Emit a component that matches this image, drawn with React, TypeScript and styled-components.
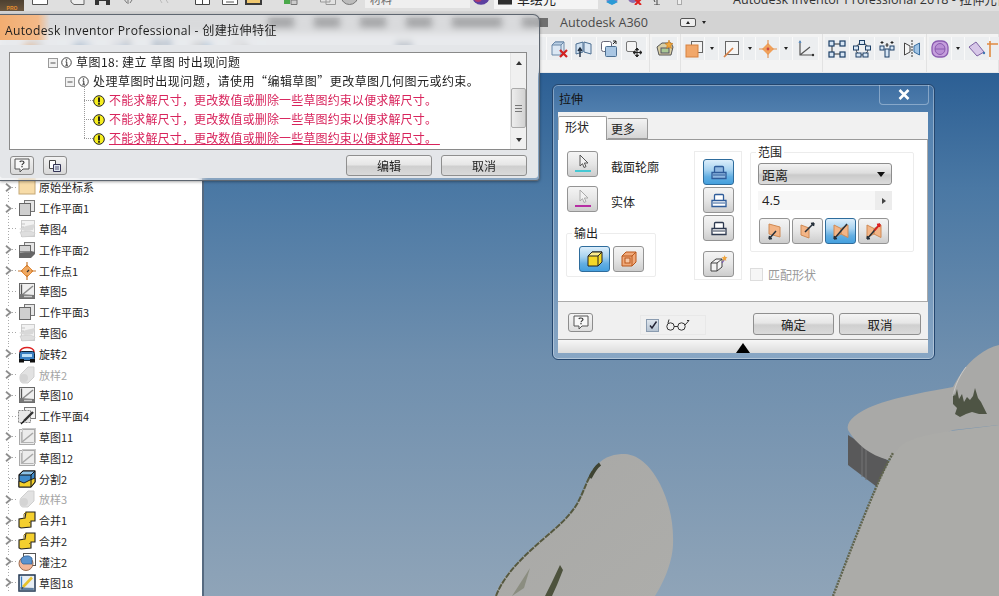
import React from "react";
import styled, { createGlobalStyle } from "styled-components";

const CJK = `"Noto Sans CJK SC", "Noto Sans", sans-serif`;
const LATIN = `"Open Sans", "Noto Sans CJK SC", sans-serif`;

const Global = createGlobalStyle`
  html, body { margin: 0; padding: 0; background: #6d8cab; overflow: hidden; }
  * { box-sizing: border-box; }
`;

const Root = styled.div`
  position: relative;
  width: 999px;
  height: 596px;
  overflow: hidden;
  display: grid;
  grid-template-rows: 11px 23px 39px 1fr;
  font-family: ${CJK};
  color: #222;
`;

/* ---------- title bar (cropped by the top of the screenshot) ---------- */
const TitleBar = styled.div`
  display: flex;
  align-items: flex-end;
  overflow: hidden;
  background: #dfdfdf;
  height: 11px;
`;
const AppBtn = styled.div`
  flex: none;
  width: 24px;
  height: 11px;
  background: linear-gradient(#4d4030, #6a563f);
  color: #e58d2f;
  font: bold 5px "Liberation Sans", sans-serif;
  line-height: 16px;
  text-align: center;
  overflow: hidden;
`;
const QuickIcon = styled.div<{ $left: number }>`
  flex: none;
  margin-left: ${(p) => p.$left}px;
  height: 12px;
  padding-bottom: 6px;
  display: flex;
  align-items: flex-end;
`;
const SearchBox = styled.div`
  flex: none;
  margin-left: 7px;
  margin-bottom: 3px;
  width: 105px;
  height: 10px;
  background: #efefef;
  padding-left: 5px;
  font-size: 11px;
  line-height: 2px;
  color: #666;
  overflow: hidden;
`;
const UserBox = styled.div`
  flex: none;
  margin-left: 4px;
  width: 104px;
  height: 9px;
  margin-bottom: 2px;
  background: #f4f4f4;
  display: flex;
  gap: 5px;
  padding-left: 4px;
  font-size: 13px;
  line-height: 1px;
  color: #222;
  overflow: hidden;
  & > span {
    margin-top: -2px;
  }
`;
const AppTitle = styled.div`
  flex: none;
  margin-left: 51px;
  font: 12.6px ${LATIN};
  line-height: 6px;
  height: 6px;
  margin-bottom: 8px;
  color: #333;
  white-space: nowrap;
`;

/* ---------- tabs ---------- */
const TabRow = styled.div`
  display: flex;
  align-items: center;
  background: #d3d3d3;
`;
const TabGhost = styled.span<{ $left: number; $w: number }>`
  flex: none;
  margin-left: ${(p) => p.$left}px;
  width: ${(p) => p.$w}px;
  height: 9px;
  background: #6f6f6f;
`;
const Tab = styled.span<{ $left: number }>`
  flex: none;
  margin-left: ${(p) => p.$left}px;
  font: 12.6px ${LATIN};
  color: #4a4a4a;
  white-space: nowrap;
`;
const ToggleBtn = styled.span`
  flex: none;
  margin-left: 32px;
  width: 16px;
  height: 9px;
  border: 1px solid #555;
  border-radius: 2px;
  background: #eee;
  display: flex;
  align-items: center;
  justify-content: center;
  &::before {
    content: "";
    border-left: 2.5px solid transparent;
    border-right: 2.5px solid transparent;
    border-bottom: 3px solid #222;
  }
`;
const Caret = styled.span<{ $left?: number }>`
  flex: none;
  display: block;
  margin-left: ${(p) => p.$left ?? 0}px;
  border-left: 2.5px solid transparent;
  border-right: 2.5px solid transparent;
  border-top: 3px solid #222;
`;

/* ---------- ribbon ---------- */
const Ribbon = styled.div`
  display: flex;
  background: #f3f3f3;
  border-bottom: 1px solid #e6e8ea;
`;
const RibbonPanel = styled.div<{ $w: number }>`
  flex: none;
  width: ${(p) => p.$w}px;
  padding: 3px 2px 0;
  border-right: 1px solid #e2e2e2;
  display: flex;
  align-items: flex-start;
`;
const RibbonBtn = styled.div<{ $w?: number }>`
  flex: none;
  width: ${(p) => p.$w ?? 25}px;
  height: 23px;
  background: #eceef0;
  border-right: 1px solid #f9f9f9;
  display: flex;
  align-items: center;
  justify-content: center;
`;

/* ---------- main ---------- */
const Main = styled.div`
  display: flex;
  min-height: 0;
`;
const BrowserPanel = styled.div`
  flex: none;
  width: 204px;
  background: #fff;
  border-right: 2px solid #566a80;
  padding-top: 104px;
`;
const TreeRow = styled.div`
  height: 20.8px;
  display: flex;
  align-items: center;
  font-size: 11px;
  white-space: nowrap;
`;
const Connector = styled.span`
  flex: none;
  width: 18px;
  height: 100%;
  display: flex;
  align-items: center;
  background:
    repeating-linear-gradient(to bottom, #aaa 0 1px, transparent 1px 3px) 8px 0 / 1px 100% no-repeat,
    repeating-linear-gradient(to right, #aaa 0 1px, transparent 1px 3px) 9px 50% / 9px 1px no-repeat;
`;
const Chevron = styled.svg`
  display: block;
  margin-left: 5px;
  background: #fff;
`;
const TreeLabel = styled.span<{ $faded?: boolean }>`
  margin-left: 3px;
  color: ${(p) => (p.$faded ? "#a4a4a4" : "#252525")};
`;
const Viewport = styled.div`
  flex: 1;
  min-width: 0;
  background: linear-gradient(#2c5f94 0%, #4a78a4 22%, #6f8fae 55%, #8fa4b8 100%);
`;
const ModelSvg = styled.svg`
  display: block;
  width: 100%;
  height: 100%;
`;

/* ---------- error window ---------- */
const ErrorWindow = styled.div`
  position: absolute;
  left: 0;
  top: 14px;
  width: 540px;
  height: 167px;
  border: 1px solid #5e6670;
  border-left: none;
  border-radius: 0 7px 4px 0;
  background: rgba(226, 229, 233, 0.42);
  backdrop-filter: blur(3.5px);
  display: flex;
  flex-direction: column;
  box-shadow: 0 1px 3px rgba(0, 0, 0, 0.35);
`;
const ErrorTitle = styled.div`
  flex: none;
  height: 30px;
  padding: 0 0 0 5px;
  font: 12.1px ${LATIN};
  letter-spacing: 0.33px;
  color: #1d1d1d;
  display: flex;
  align-items: center;
  white-space: nowrap;
  background: linear-gradient(to right, #f2ad70 0, #f3b988 38px, rgba(240, 190, 150, 0) 50px) 0 0 / 100% 25px no-repeat;
`;
const ErrorBody = styled.div`
  flex: 1;
  margin: 0 1px 2px 0;
  padding: 7px 11px 0 9px;
  background: #e4e6e9;
  border-radius: 0 0 3px 3px;
`;
const MessageBox = styled.div`
  height: 98px;
  display: flex;
  background: #fff;
  border: 1px solid #8a8a8a;
`;
const MessageList = styled.div`
  position: relative;
  flex: 1;
`;
const TreeStem = styled.span`
  position: absolute;
  left: 74px;
  top: 34px;
  width: 1px;
  height: 51px;
  background: repeating-linear-gradient(to bottom, #999 0 1px, transparent 1px 2px);
`;
const MessageRow = styled.div<{ $indent: number; $error?: boolean; $underline?: boolean }>`
  height: 19px;
  padding-left: ${(p) => p.$indent}px;
  display: flex;
  align-items: center;
  gap: 4px;
  font-size: 12px;
  white-space: nowrap;
  color: ${(p) => (p.$error ? "#d8245c" : "#222")};
  & > b {
    font-weight: 400;
    position: relative;
    top: -1px;
    text-decoration: ${(p) => (p.$underline ? "underline" : "none")};
    letter-spacing: ${(p) => (p.$error ? 0.15 : 0.46)}px;
  }
`;
const Scrollbar = styled.div`
  flex: none;
  width: 16px;
  background: #f0f0f0;
  border-left: 1px solid #e4e4e4;
  display: flex;
  flex-direction: column;
  align-items: center;
  justify-content: space-between;
  padding: 8px 0 7px;
  position: relative;
`;
const ScrollThumb = styled.div`
  position: absolute;
  left: 0;
  top: 35px;
  width: 15px;
  height: 40px;
  background: linear-gradient(to right, #ededed, #d2d2d2);
  border: 1px solid #aaa;
  border-radius: 2px;
  display: flex;
  flex-direction: column;
  align-items: center;
  justify-content: center;
  gap: 2px;
  & > i {
    width: 7px;
    height: 1px;
    background: #777;
  }
`;
const ArrowUp = styled.span`
  border-left: 3px solid transparent;
  border-right: 3px solid transparent;
  border-bottom: 4px solid #333;
`;
const ArrowDown = styled.span`
  border-left: 3px solid transparent;
  border-right: 3px solid transparent;
  border-top: 4px solid #333;
`;
const ErrorFooter = styled.div`
  margin-top: 5px;
  display: flex;
  align-items: center;
`;
const SmallBtn = styled.div<{ $w: number; $left?: number }>`
  flex: none;
  margin-left: ${(p) => p.$left ?? 0}px;
  width: ${(p) => p.$w}px;
  height: 19px;
  border: 1px solid #8d8d8d;
  border-radius: 3px;
  background: linear-gradient(#f3f3f3, #d8d8d8);
  display: flex;
  align-items: center;
  justify-content: center;
`;
const PushBtn = styled.button<{ $w: number; $left?: number }>`
  flex: none;
  margin-left: ${(p) => p.$left ?? 0}px;
  width: ${(p) => p.$w}px;
  height: 21px;
  padding: 0;
  border: 1px solid #8f8f8f;
  border-radius: 3px;
  background: linear-gradient(#f4f4f4 0%, #e6e6e6 45%, #cfcfcf 55%, #dadada 100%);
  font-family: ${CJK};
  font-size: 12px;
  color: #222;
`;

/* ---------- extrude window ---------- */
const ExtrudeWindow = styled.div`
  position: absolute;
  left: 552px;
  top: 84px;
  width: 383px;
  height: 276px;
  border: 1px solid #24466e;
  border-radius: 6px;
  background: linear-gradient(#3f6fa2 0%, #5482b0 12%, #6d93b8 60%, #88a6c4 100%);
  box-shadow: inset 0 0 0 1px rgba(255, 255, 255, 0.35);
  display: flex;
  flex-direction: column;
  padding: 0 6px 6px 5px;
`;
const ExtrudeHead = styled.div`
  flex: none;
  height: 27px;
  display: flex;
  align-items: flex-start;
  justify-content: space-between;
  font-size: 12px;
  color: #111;
  padding-left: 1px;
  line-height: 28px;
`;
const CloseBtn = styled.div`
  flex: none;
  width: 50px;
  height: 20px;
  margin-right: -1px;
  border: 1px solid rgba(210, 225, 240, 0.45);
  border-top: none;
  border-radius: 0 0 4px 4px;
  display: flex;
  align-items: center;
  justify-content: center;
`;
const ExtrudeClient = styled.div`
  flex: 1;
  display: flex;
  flex-direction: column;
  background: #f1f1f1;
  min-height: 0;
`;
const TabStrip = styled.div`
  flex: none;
  height: 27px;
  padding-top: 4px;
  display: flex;
  align-items: flex-end;
  background: #f1f1f1;
`;
const DlgTab = styled.div<{ $active?: boolean }>`
  flex: none;
  width: ${(p) => (p.$active ? 49 : 41)}px;
  height: ${(p) => (p.$active ? 24 : 21)}px;
  margin-bottom: ${(p) => (p.$active ? -1 : 0)}px;
  border: 1px solid #9a9a9a;
  border-bottom: ${(p) => (p.$active ? "none" : "1px solid #9a9a9a")};
  border-left-color: ${(p) => (p.$active ? "#bbb" : "transparent")};
  border-radius: 2px 2px 0 0;
  background: ${(p) => (p.$active ? "#fff" : "linear-gradient(#f2f2f2, #d6d6d6)")};
  font-size: 12px;
  line-height: 20px;
  padding-left: ${(p) => (p.$active ? 6 : 3)}px;
  position: relative;
`;
const FormArea = styled.div`
  flex: none;
  height: 163px;
  background: #fff;
  border-top: 1px solid #9a9a9a;
  border-right: 1px solid #aaa;
  border-bottom: 1px solid #aaa;
  display: grid;
  grid-template-columns: 99px 44px auto;
  column-gap: 0;
  padding: 11px 0 0 9px;
`;
const LeftCol = styled.div`
  display: flex;
  flex-direction: column;
  gap: 9px;
`;
const SelectRow = styled.div`
  display: flex;
  align-items: center;
  gap: 13px;
  font-size: 12px;
`;
const SelectLabel = styled.span`
  position: relative;
  top: 2px;
`;
const FeatureBtn = styled.div<{ $active?: boolean; $w?: number; $h?: number }>`
  flex: none;
  width: ${(p) => p.$w ?? 31}px;
  height: ${(p) => p.$h ?? 26}px;
  border: 1px solid ${(p) => (p.$active ? "#2e6c9c" : "#949494")};
  border-radius: 3px;
  background: ${(p) =>
    p.$active
      ? "linear-gradient(#dceefb 0%, #a9d3f0 40%, #62aee2 70%, #45a0de 100%)"
      : "linear-gradient(#f4f4f4 0%, #e6e6e6 50%, #cdcdcd 100%)"};
  display: flex;
  align-items: center;
  justify-content: center;
`;
const Group = styled.fieldset<{ $w?: number }>`
  margin: 0;
  min-width: 0;
  width: ${(p) => (p.$w ? `${p.$w}px` : "auto")};
  border: 1px solid #ececec;
  border-radius: 2px;
`;
const GroupLegend = styled.legend<{ $shift: number }>`
  padding: 0 2px;
  margin-left: ${(p) => p.$shift}px;
  font-size: 12px;
  line-height: 12px;
`;
const OutputGroup = styled(Group)`
  margin: 6px 0 0 -1px;
  height: 50px;
  padding: 7px 0 0 12px;
`;
const OutputRow = styled.div`
  display: flex;
  gap: 3px;
`;
const DirectionGroup = styled.div`
  margin-left: 28px;
  width: 48px;
  height: 129px;
  border: 1px solid #ececec;
  padding: 7px 0 0 8px;
  display: flex;
  flex-direction: column;
  gap: 2px;
`;
const DirSpacer = styled.div`
  height: 6px;
  flex: none;
`;
const RightCol = styled.div`
  margin-left: 40px;
  display: flex;
  flex-direction: column;
`;
const RangeGroup = styled(Group)`
  width: 164px;
  height: 106px;
  margin-top: -5px;
  padding: 5px 0 0 7px;
`;
const DropDown = styled.div`
  width: 134px;
  height: 22px;
  border: 1px solid #8d8d8d;
  border-radius: 3px;
  background: linear-gradient(#f2f2f2, #dedede 45%, #cacaca 55%, #dcdcdc);
  font-size: 13px;
  padding: 0 6px 0 3px;
  display: flex;
  align-items: center;
  justify-content: space-between;
  &::after {
    content: "";
    border-left: 4px solid transparent;
    border-right: 4px solid transparent;
    border-top: 5px solid #111;
  }
`;
const NumberField = styled.div`
  margin-top: 6px;
  width: 134px;
  height: 19px;
  background: #f7f7f7;
  font: 13px ${LATIN};
  padding-left: 4px;
  display: flex;
  align-items: center;
  justify-content: space-between;
  line-height: 19px;
`;
const Spinner = styled.span`
  width: 17px;
  height: 100%;
  background: #ececec;
  display: flex;
  align-items: center;
  justify-content: center;
  &::before {
    content: "";
    border-top: 3px solid transparent;
    border-bottom: 3px solid transparent;
    border-left: 4px solid #444;
  }
`;
const RangeButtons = styled.div`
  margin-top: 8px;
  display: flex;
  gap: 2px;
  padding-left: 1px;
`;
const MatchRow = styled.div`
  margin-top: 14px;
  display: flex;
  align-items: center;
  gap: 5px;
  font-size: 12px;
  color: #9a9a9a;
`;
const DisabledCheck = styled.span`
  width: 13px;
  height: 13px;
  background: #f6f6f6;
  border: 1px solid #ddd;
`;
const DlgFooter = styled.div`
  flex: none;
  height: 37px;
  padding: 11px 7px 0 10px;
  display: flex;
  align-items: flex-start;
  background: #f0f0f0;
`;
const HelpBtn = styled.div`
  flex: none;
  width: 25px;
  height: 19px;
  border: 1px solid #8d8d8d;
  border-radius: 3px;
  background: linear-gradient(#f5f5f5, #dedede);
  display: flex;
  align-items: center;
  justify-content: center;
`;
const PreviewGroup = styled.div`
  flex: none;
  margin: 2px 0 0 47px;
  width: 66px;
  height: 20px;
  border: 1px solid #e8e8e8;
  padding-left: 5px;
  display: flex;
  align-items: center;
  gap: 6px;
`;
const CheckBox = styled.span`
  flex: none;
  width: 13px;
  height: 13px;
  border: 1px solid #8b9cb0;
  background: linear-gradient(#dfe6ee, #b7c4d2);
  display: flex;
  align-items: center;
  justify-content: center;
`;
const WideBtn = styled(PushBtn)`
  height: 22px;
  font-size: 12.5px;
`;
const SliderBar = styled.div`
  flex: 1;
  min-height: 0;
  border-top: 1px solid #999;
  background: linear-gradient(#f6f6f6, #dcdcdc);
  display: flex;
  justify-content: center;
  align-items: flex-end;
  padding-right: 1px;
  &::before {
    content: "";
    border-left: 7px solid transparent;
    border-right: 7px solid transparent;
    border-bottom: 10px solid #000;
  }
`;

/* ---------- drawings ---------- */
const Ico = styled.svg`
  display: block;
  flex: none;
`;
const SpacedIco = styled(Ico)<{ $after: number }>`
  margin-right: ${(p) => p.$after}px;
`;
type IP = { s?: number; children: React.ReactNode };
const I = ({ s = 18, children }: IP) => (
  <Ico width={s} height={s} viewBox="0 0 18 18">
    {children}
  </Ico>
);

const treeIcons: Record<string, React.ReactNode> = {
  folder: (
    <I>
      <rect x="1" y="0" width="16" height="16" fill="#f7dca8" stroke="#c4a877" />
      <rect x="1" y="0" width="16" height="2.5" fill="#e8c27f" />
    </I>
  ),
  plane: (
    <I>
      <rect x="6.5" y="1.5" width="10" height="11" fill="#e6e6e6" stroke="#777" />
      <rect x="1.5" y="4.5" width="11" height="12" fill="#cfcfcf" stroke="#666" />
    </I>
  ),
  planeDark: (
    <I>
      <rect x="6.5" y="1.5" width="10" height="11" fill="#e6e6e6" stroke="#777" />
      <rect x="1.5" y="4.5" width="11" height="12" fill="#d5d5d5" stroke="#666" />
      <polygon points="1,12 13,10 17,11 17,13 13,17 1,17" fill="#666" />
      <rect x="2" y="10" width="10" height="1.5" fill="#888" />
    </I>
  ),
  sketchFaint: (
    <I>
      <rect x="3.5" y="0.5" width="13" height="16" fill="#f2f2f2" stroke="#ccc" />
      <polygon points="1,9 8,6 17,4 15,10 7,11" fill="#d8d8d8" />
      <polygon points="2,12 12,11 17,13 16,16 4,17" fill="#dedede" stroke="#c8c8c8" strokeWidth=".6" />
      <path d="M3 4h4M3 7h3" stroke="#c4c4c4" strokeWidth="1.2" />
    </I>
  ),
  sketchDark: (
    <I>
      <rect x="1.5" y="1.5" width="15" height="15" fill="#efefef" stroke="#666" />
      <path d="M3.5 2.5V14.5H16" fill="none" stroke="#555" strokeWidth="1.3" />
      <path d="M4 13 15 4" stroke="#8a8a8a" strokeWidth="1.5" />
      <polygon points="1.5,12 16.5,13 16.5,16.5 1.5,16.5" fill="#777" />
      <rect x="6" y="13.8" width="8" height="1.4" fill="#ccc" />
    </I>
  ),
  point: (
    <I>
      <polygon points="9,3 15,9 9,15 3,9" fill="#f0a860" stroke="#e08a3a" />
      <path d="M9 0V5M9 13V18M0 9H5M13 9H18" stroke="#c8782e" strokeWidth="1.2" />
      <path d="M9 10 11 8" stroke="#333" strokeWidth="1.2" />
    </I>
  ),
  revolve: (
    <I>
      <path d="M2 7C2 1 16 1 16 7" fill="none" stroke="#d22" strokeWidth="1.7" />
      <rect x="1.5" y="6.5" width="15" height="9" rx="2" fill="#3b7fc0" stroke="#123" />
      <rect x="4" y="9" width="10" height="3" fill="#bfe0f7" />
      <rect x="1" y="14" width="5" height="3.5" fill="#111" />
      <rect x="12" y="14" width="5" height="3.5" fill="#111" />
    </I>
  ),
  loft: (
    <I>
      <path d="M3 8 10 1H16V11L10 17H5C2 17 1 11 3 8Z" fill="#e2e2e2" stroke="#cfcfcf" />
      <circle cx="6" cy="12" r="4" fill="#d4d4d4" />
    </I>
  ),
  planePen: (
    <I>
      <rect x="6.5" y="0.5" width="11" height="11" fill="#f4f4f4" stroke="#777" />
      <rect x="0.5" y="3.5" width="12" height="12" fill="#e8e8e8" stroke="#888" strokeDasharray="2 1" />
      <path d="M15 5 6 14" stroke="#333" strokeWidth="2.4" />
      <path d="M6 14 3 17" stroke="#111" strokeWidth="1.2" />
    </I>
  ),
  sketchGrey: (
    <I>
      <rect x="1.5" y="1.5" width="15" height="15" fill="#ececec" stroke="#aaa" />
      <rect x="4.5" y="0.5" width="13" height="14" fill="none" stroke="#c8c8c8" />
      <path d="M4 14 15 5" stroke="#a8a8a8" strokeWidth="1.6" />
      <path d="M3.5 4V14.5H15" fill="none" stroke="#b4b4b4" strokeWidth="1.2" />
    </I>
  ),
  split: (
    <I>
      <polygon points="1,5 5,1 17,1 17,12 13,17 1,17" fill="#3f8bcb" stroke="#111" strokeWidth="1.2" />
      <polygon points="1,11 6,13 12,10 17,8 17,12 13,17 1,17" fill="#f2cf2a" stroke="#222" />
      <polygon points="1,5 5,1 17,1 13,5" fill="#8cc3ea" stroke="#111" />
      <path d="M13 5V17" stroke="#111" />
    </I>
  ),
  merge: (
    <I>
      <polygon points="8,1 17,1 17,10 13,10 13,16 3,17 1,16 1,8 7,7" fill="#f4cf2e" stroke="#222" strokeWidth="1.1" />
      <path d="M8 1 6 3V8M13 10 11 12" fill="none" stroke="#8a6f10" />
    </I>
  ),
  cast: (
    <I>
      <rect x="5.5" y="0.5" width="12" height="12" fill="#fff" stroke="#555" />
      <circle cx="8" cy="10.5" r="7" fill="#f2b79a" stroke="#9a6a4c" />
      <path d="M3 8a6 5 0 0 1 11-3v6H5A6 5 0 0 1 3 8Z" fill="#5a93cf" stroke="#2b5c8f" strokeWidth=".7" />
    </I>
  ),
  sketch18: (
    <I>
      <rect x="1" y="1" width="16" height="16" fill="#e7eef5" stroke="#1f3550" strokeWidth="1.5" />
      <path d="M3.5 2.5V15H15.5" fill="none" stroke="#3a7fc2" strokeWidth="1.3" />
      <path d="M5 13 14 3.5" stroke="#e8c32c" strokeWidth="2.6" />
      <path d="M5 13 4 15" stroke="#333" strokeWidth="1.2" />
      <polygon points="1,13 17,14 17,17 1,17" fill="#5a6c80" opacity=".55" />
    </I>
  ),
};

const treeItems: { icon: string; label: string; chevron: boolean; faded?: boolean }[] = [
  { icon: "folder", label: "原始坐标系", chevron: true },
  { icon: "plane", label: "工作平面1", chevron: true },
  { icon: "sketchFaint", label: "草图4", chevron: false },
  { icon: "planeDark", label: "工作平面2", chevron: true },
  { icon: "point", label: "工作点1", chevron: true },
  { icon: "sketchDark", label: "草图5", chevron: false },
  { icon: "plane", label: "工作平面3", chevron: true },
  { icon: "sketchFaint", label: "草图6", chevron: false },
  { icon: "revolve", label: "旋转2", chevron: true },
  { icon: "loft", label: "放样2", chevron: true, faded: true },
  { icon: "sketchDark", label: "草图10", chevron: true },
  { icon: "planePen", label: "工作平面4", chevron: false },
  { icon: "sketchGrey", label: "草图11", chevron: true },
  { icon: "sketchGrey", label: "草图12", chevron: true },
  { icon: "split", label: "分割2", chevron: false },
  { icon: "loft", label: "放样3", chevron: true, faded: true },
  { icon: "merge", label: "合并1", chevron: true },
  { icon: "merge", label: "合并2", chevron: true },
  { icon: "cast", label: "灌注2", chevron: true },
  { icon: "sketch18", label: "草图18", chevron: true },
];

const ChevronIcon = () => (
  <Chevron width="7" height="9" viewBox="0 0 7 9">
    <path d="M1 .8 5.5 4.5 1 8.2" fill="none" stroke="#8d8d8d" strokeWidth="1.8" />
  </Chevron>
);

const Minus = () => (
  <SpacedIco $after={-1} width="10" height="10" viewBox="0 0 10 10">
    <rect x=".5" y=".5" width="9" height="9" fill="#f2f2f2" stroke="#9a9a9a" />
    <path d="M2.5 5h5" stroke="#555" />
  </SpacedIco>
);
const InfoIcon = () => (
  <Ico width="11" height="11" viewBox="0 0 12 12">
    <circle cx="6" cy="6" r="5.2" fill="#fff" stroke="#333" />
    <path d="M5 5.3h1.3v3.5M4.8 9h2.8" fill="none" stroke="#222" />
    <circle cx="6" cy="3.2" r=".8" fill="#222" />
  </Ico>
);
const WarnIcon = () => (
  <Ico width="12" height="12" viewBox="0 0 12 12">
    <circle cx="6" cy="6" r="5.3" fill="#f6ee1f" stroke="#222" />
    <rect x="5.1" y="2.4" width="1.8" height="5" fill="#111" />
    <rect x="5.1" y="8.1" width="1.8" height="1.6" fill="#111" />
  </Ico>
);
const Dash = () => (
  <SpacedIco $after={-4} width="9" height="1" viewBox="0 0 9 1">
    <path d="M0 .5h9" stroke="#999" strokeDasharray="1 1" />
  </SpacedIco>
);
const HelpIcon = () => (
  <Ico width="16" height="15" viewBox="0 0 16 15">
    <path d="M1 1H15V11H9L6 14V11H1Z" fill="#f8f8f8" stroke="#555" />
    <path d="M5.8 4C6.2 2.6 9.8 2.6 10 4.3 10.1 5.6 8 5.6 8 7.3" fill="none" stroke="#333" strokeWidth="1.1" />
    <rect x="7.4" y="8" width="1.2" height="1.3" fill="#333" />
  </Ico>
);
const CopyIcon = () => (
  <Ico width="14" height="14" viewBox="0 0 14 14">
    <path d="M1.5 1.5H7.5V9.5H1.5Z" fill="#fff" stroke="#444" />
    <path d="M5.5 5.5H12.5V12.5H5.5Z" fill="#dfe6ef" stroke="#335" />
    <path d="M7 8h4M7 10h4" stroke="#557" />
  </Ico>
);

/* ribbon icons */
const cube = (
  <>
    <polygon points="2,5 5,2 14,2 14,12 11,15 2,15" fill="#dbe7f3" stroke="#6a88a8" />
    <polygon points="2,5 5,2 14,2 11,5" fill="#b9cfe4" stroke="#6a88a8" />
    <path d="M11 5V15" stroke="#6a88a8" />
  </>
);
const ribbonIcons: Record<string, React.ReactNode> = {
  cubeX: (
    <I>
      {cube}
      <path d="M10 10 17 17M17 10 10 17" stroke="#d22020" strokeWidth="2.2" />
    </I>
  ),
  replace: (
    <I>
      <path d="M1 4 8 2 8 12 1 14Z" fill="#cfe0f0" stroke="#4c6f92" />
      <path d="M9 2 16 4 16 14 9 12Z" fill="#dbe7f3" stroke="#4c6f92" />
      <path d="M5 17V9M3 11l2-3 2 3" fill="none" stroke="#1e2d40" strokeWidth="1.4" />
    </I>
  ),
  copy: (
    <I>
      <rect x="1.5" y="1.5" width="10" height="10" rx="2" fill="#fff" stroke="#667" />
      <rect x="5.5" y="6.5" width="11" height="10" rx="1" fill="#a9c6e3" stroke="#4c6f92" />
      <path d="M13 1h3v3M16 1l-3 3" fill="none" stroke="#222" />
    </I>
  ),
  move: (
    <I>
      <rect x="1.5" y="1.5" width="10" height="10" rx="1.5" fill="#f4f4f4" stroke="#777" />
      <path d="M12 8V17M8 12.5H17M12 8l-1.6 1.8h3.2ZM12 17l-1.6-1.8h3.2ZM8 12.5l1.8-1.6v3.2ZM17 12.5l-1.8-1.6v3.2Z" stroke="#222" fill="#222" />
    </I>
  ),
  boxStar: (
    <I>
      <polygon points="1,7 6,3 15,3 17,7 15,15 3,15" fill="#d9cfa6" stroke="#555" />
      <rect x="5" y="8" width="8" height="5" fill="#a9c795" stroke="#556" />
      <path d="M13 0 14 3 17 3.5 14.8 5.5 15.5 8.5 13 7 10.5 8.5 11.2 5.5 9 3.5 12 3Z" fill="#f2a63a" stroke="#b86f15" strokeWidth=".5" />
    </I>
  ),
  planeOrange: (
    <I>
      <rect x="6.5" y="1.5" width="11" height="11" fill="#f3f3f3" stroke="#666" />
      <rect x="1" y="5" width="12" height="12" fill="#f1a76a" stroke="#d7813f" />
    </I>
  ),
  planePen: (
    <I>
      <rect x="3.5" y="1.5" width="13" height="13" fill="#f5f5f5" stroke="#666" />
      <path d="M11 8 2 17" stroke="#d6824a" strokeWidth="1.7" />
    </I>
  ),
  point: (
    <I>
      <polygon points="9,3 15,9 9,15 3,9" fill="#f0a05a" />
      <path d="M9 0V5M9 13V18M0 9H5M13 9H18" stroke="#e2914e" strokeWidth="1.1" />
      <circle cx="9" cy="9" r="1.4" fill="#c44" />
    </I>
  ),
  axes: (
    <I>
      <path d="M3 1V15H17M3 15 13 7" fill="none" stroke="#555" strokeWidth="1.2" />
      <path d="M3 0 1.5 3h3Z" fill="#5a8ec4" />
      <circle cx="16" cy="15" r="1.2" fill="#333" />
    </I>
  ),
  rectPattern: (
    <I>
      <path d="M4 4H14M4 14H14M4 4V14" stroke="#333" />
      <rect x="1" y="1" width="5" height="5" fill="#d7e6f5" stroke="#1c3f66" strokeWidth="1.2" />
      <rect x="12" y="1" width="5" height="5" fill="#d7e6f5" stroke="#1c3f66" strokeWidth="1.2" />
      <rect x="1" y="12" width="5" height="5" fill="#d7e6f5" stroke="#1c3f66" strokeWidth="1.2" />
      <rect x="12" y="12" width="5" height="5" fill="#d7e6f5" stroke="#1c3f66" strokeWidth="1.2" />
    </I>
  ),
  circPattern: (
    <I>
      <circle cx="9" cy="9" r="6" fill="none" stroke="#444" />
      <rect x="6.5" y="0.5" width="5" height="4" fill="#d7e6f5" stroke="#1c3f66" />
      <rect x="0.5" y="6" width="5" height="4" fill="#d7e6f5" stroke="#1c3f66" />
      <rect x="12.5" y="6" width="5" height="4" fill="#d7e6f5" stroke="#1c3f66" />
      <rect x="3" y="13" width="5" height="4" fill="#d7e6f5" stroke="#1c3f66" />
      <rect x="10" y="13" width="5" height="4" fill="#d7e6f5" stroke="#1c3f66" />
    </I>
  ),
  grid: (
    <I>
      <rect x="2" y="6" width="4" height="4" fill="#d7e6f5" stroke="#1c3f66" />
      <rect x="7" y="9" width="4" height="8" fill="#d7e6f5" stroke="#1c3f66" />
      <rect x="12" y="6" width="4" height="4" fill="#d7e6f5" stroke="#1c3f66" />
      <path d="M4 1V4M2.5 2.5H5.5M9 3V7M7.5 5H10.5M14 1V4M12.5 2.5H15.5" stroke="#222" />
    </I>
  ),
  mirror: (
    <I>
      <path d="M1.5 3 7 6V12L1.5 15Z" fill="#f4f4f4" stroke="#444" />
      <path d="M16.5 3 11 6V12L16.5 15Z" fill="#9fc3e4" stroke="#3a6fa0" />
      <path d="M9 0V18" stroke="#333" strokeDasharray="2 1" />
    </I>
  ),
  sphere: (
    <I>
      <rect x="1" y="1" width="16" height="16" rx="6" fill="#c6a0dd" stroke="#8a5bb0" strokeWidth="1.3" />
      <ellipse cx="9" cy="9" rx="5" ry="5.5" fill="#b98fd4" stroke="#8a5bb0" />
      <path d="M4 9H14" stroke="#8a5bb0" />
    </I>
  ),
  diamond: (
    <I>
      <polygon points="1,7 8,2 16,12 9,16" fill="#d7c7e8" stroke="#7e63a3" />
      <circle cx="16" cy="13" r="1.2" fill="#3f78b5" />
    </I>
  ),
  orange: (
    <I>
      <path d="M4 1V17M1 4H12" stroke="#e08b42" strokeWidth="1.6" />
    </I>
  ),
};

const RB = ({ k, w }: { k: string; w?: number }) => <RibbonBtn $w={w}>{ribbonIcons[k]}</RibbonBtn>;
const DD = ({ w }: { w: number }) => (
  <RibbonBtn $w={w}>
    <Caret />
  </RibbonBtn>
);

/* dialog icons */
const Cursor = ({ color, line }: { color: string; line: string }) => (
  <Ico width="20" height="20" viewBox="0 0 20 20">
    <path d="M7 1V12L9.5 9.7 11 13.5 13 12.6 11.4 9H15Z" fill="#f2f2f2" stroke={color} />
    <path d="M2 17H18" stroke={line} strokeWidth="1.7" />
  </Ico>
);
const SolidOut = () => (
  <Ico width="18" height="18" viewBox="0 0 18 18">
    <polygon points="2,6 6,2 16,2 16,12 12,16 2,16" fill="#f6d827" stroke="#222" />
    <polygon points="2,6 6,2 16,2 12,6" fill="#faeb8c" stroke="#222" />
    <path d="M12 6V16" stroke="#222" />
  </Ico>
);
const SurfaceOut = () => (
  <Ico width="18" height="18" viewBox="0 0 18 18">
    <polygon points="2,6 6,2 16,2 16,12 12,16 2,16" fill="#f0a97a" stroke="#b8571a" />
    <path d="M2 6H12V16M12 6 16 2" fill="none" stroke="#b8571a" />
    <rect x="5" y="8" width="5" height="5" fill="#f6c7a6" stroke="#b8571a" />
  </Ico>
);
const DirIcon = ({ fill, stroke, trayTop }: { fill: string; stroke: string; trayTop?: boolean }) => (
  <Ico width="18" height="17" viewBox="0 0 18 17">
    <rect x="4.5" y="2.5" width="9" height="8" rx="1" fill={fill} stroke={stroke} strokeWidth="1.3" />
    <path d="M2 8.5H16V14.5H2Z" fill={trayTop ? fill : "#fff"} stroke={stroke} strokeWidth="1.3" />
    <path d="M3 11H15" stroke={stroke} />
  </Ico>
);
const AsymIcon = () => (
  <Ico width="20" height="20" viewBox="0 0 20 20">
    <polygon points="2,9 7,5 13,5 13,13 8,17 2,17" fill="#f3f3f3" stroke="#444" />
    <path d="M2 9H8V17M8 9 13 5" fill="none" stroke="#444" />
    <path d="M13 9 17 3" stroke="#7a5cb0" strokeWidth="1.3" />
    <path d="M15.5 1 16.2 3 18.5 3.4 16.8 4.8 17.3 7 15.5 5.8 13.7 7 14.2 4.8 12.5 3.4 14.8 3Z" fill="#f2a63a" />
  </Ico>
);
const RangeIcon = ({ v }: { v: number }) => (
  <Ico width="20" height="20" viewBox="0 0 20 20">
    <path
      d={v === 0 ? "M4 3 15 6V16L4 13Z" : v === 1 ? "M3 4 11 7V17L3 14Z" : "M3 4 10 7.5V13L3 16.5ZM10 7.5 17 4V16.5L10 13Z"}
      fill="#f3b587"
      stroke="#cf8a54"
    />
    <path
      d={v === 0 ? "M4 18 11 10M4 18l.6-3M4 18l3-.6" : v === 1 ? "M7 11 16 2M16 2l-3 .6M16 2l-.6 3" : "M3 18 16 3M3 18l.6-3M3 18l3-.6"}
      fill="none"
      stroke="#26303a"
      strokeWidth="1.5"
    />
    {v === 3 && <path d="M10.5 9.5 16 3M16 3l-3 .6M16 3l-.6 3" fill="none" stroke="#e01f1f" strokeWidth="1.7" />}
  </Ico>
);

export default function App() {
  return (
    <>
      <Global />
      <Root lang="zh-CN">
        <TitleBar>
          <AppBtn>PRO</AppBtn>
          <QuickIcon $left={8}>
            <Ico width="16" height="8" viewBox="0 0 16 8"><path d="M.5 0V7.5H15.5V0" fill="#fff" stroke="#555" /></Ico>
          </QuickIcon>
          <QuickIcon $left={22}>
            <Ico width="15" height="8" viewBox="0 0 15 8"><path d="M1 0V5L4 7.5H14V0" fill="#eee" stroke="#666" /></Ico>
          </QuickIcon>
          <QuickIcon $left={10}>
            <Ico width="15" height="10" viewBox="0 0 15 10"><rect width="15" height="10" fill="#333" /><rect x="4" y="6" width="7" height="4" fill="#ddd" /></Ico>
          </QuickIcon>
          <QuickIcon $left={12}>
            <Ico width="13" height="8" viewBox="0 0 13 8"><path d="M1 1 5 6M6 0V7M12 0 8 6" stroke="#777" fill="none" /></Ico>
          </QuickIcon>
          <QuickIcon $left={23}>
            <Ico width="12" height="8" viewBox="0 0 12 8"><path d="M1 1 4 6M7 1 10 6" stroke="#bbb" fill="none" /></Ico>
          </QuickIcon>
          <QuickIcon $left={25}>
            <Ico width="15" height="9" viewBox="0 0 15 9"><path d="M.5 0V8.5H14.5V0M7.5 0V8.5" fill="#fff" stroke="#444" /></Ico>
          </QuickIcon>
          <QuickIcon $left={12}>
            <Ico width="16" height="9" viewBox="0 0 16 9"><path d="M.5 0V8.5H15.5V0M4 6H12" fill="#fff" stroke="#555" /></Ico>
          </QuickIcon>
          <QuickIcon $left={7}>
            <Ico width="17" height="9" viewBox="0 0 17 9"><rect width="17" height="9" fill="#3a3a3a" /><rect x="2" y="0" width="13" height="7" fill="#f0c870" /></Ico>
          </QuickIcon>
          <QuickIcon $left={20}>
            <Ico width="16" height="9" viewBox="0 0 16 9"><path d="M2 0H8V8H2Z" fill="#4aa84a" /><path d="M9 4H15V8.5H9Z" fill="#ccc" stroke="#777" /></Ico>
          </QuickIcon>
          <QuickIcon $left={22}>
            <Ico width="16" height="9" viewBox="0 0 16 9"><path d="M.5 0V6H10V0M6 3H15.5V8.5H6Z" fill="#e2e2e2" stroke="#999" /></Ico>
          </QuickIcon>
          <QuickIcon $left={5}>
            <Ico width="17" height="10" viewBox="0 0 17 10"><circle cx="8.5" cy="1" r="8.5" fill="#bcbcbc" stroke="#777" /><circle cx="8.5" cy="1" r="4" fill="#e2e2e2" /></Ico>
          </QuickIcon>
          <SearchBox>材料</SearchBox>
          <QuickIcon $left={2}>
            <Ico width="18" height="11" viewBox="0 0 18 11"><circle cx="9" cy="2" r="8.8" fill="#5b3fa0" /><circle cx="6" cy="4" r="4" fill="#d23a5a" opacity=".7" /></Ico>
          </QuickIcon>
          <UserBox>
            <Ico width="14" height="5" viewBox="0 0 14 5"><rect width="14" height="4" fill="#2e2e2e" /><rect y="4" width="14" height="1" fill="#888" /></Ico>
            <span>草绘元</span>
          </UserBox>
          <QuickIcon $left={7}>
            <Ico width="14" height="10" viewBox="0 0 14 10"><circle cx="7" cy="3" r="6" fill="#7c86c8" /><path d="M1 7 7 4 13 7 7 10Z" fill="#2a9ad6" /></Ico>
          </QuickIcon>
          <QuickIcon $left={9}>
            <Ico width="14" height="11" viewBox="0 0 14 11"><circle cx="5" cy="4" r="5" fill="#8a6fb0" /><path d="M7 5 13 11M13 5 7 11" stroke="#d22" strokeWidth="2" /></Ico>
          </QuickIcon>
          <QuickIcon $left={10}>
            <Ico width="9" height="7" viewBox="0 0 9 7"><path d="M1 0 3 4M5 0V7M2 7H8" stroke="#444" fill="none" /></Ico>
          </QuickIcon>
          <QuickIcon $left={16}>
            <Ico width="5" height="7" viewBox="0 0 5 7"><rect x=".5" y="0" width="4" height="6.5" fill="#eee" stroke="#aaa" /></Ico>
          </QuickIcon>
          <AppTitle>Autodesk Inventor Professional 2018 - 拉伸元件</AppTitle>
        </TitleBar>

        <TabRow>
          <TabGhost $left={268} $w={26} />
          <TabGhost $left={20} $w={26} />
          <TabGhost $left={20} $w={26} />
          <TabGhost $left={20} $w={26} />
          <TabGhost $left={20} $w={50} />
          <TabGhost $left={20} $w={26} />
          <Tab $left={12}>Autodesk A360</Tab>
          <ToggleBtn />
          <Caret $left={6} />
        </TabRow>

        <Ribbon>
          <RibbonPanel $w={650}>
            <RB k="planeOrange" w={60} />
            <RB k="replace" w={40} />
            <RB k="copy" w={40} />
            <RB k="rectPattern" w={40} />
            <RB k="mirror" w={40} />
            <RB k="move" w={40} />
            <RB k="grid" w={285} />
            <RB k="cubeX" w={25} />
            <RB k="replace" />
            <RB k="copy" />
            <RB k="move" />
          </RibbonPanel>
          <RibbonPanel $w={31}>
            <RB k="boxStar" w={26} />
          </RibbonPanel>
          <RibbonPanel $w={142}>
            <RB k="planeOrange" w={22} />
            <DD w={14} />
            <RB k="planePen" />
            <DD w={12} />
            <RB k="point" w={24} />
            <DD w={13} />
            <RB k="axes" w={26} />
          </RibbonPanel>
          <RibbonPanel $w={104}>
            <RB k="rectPattern" />
            <RB k="circPattern" />
            <RB k="grid" />
            <RB k="mirror" />
          </RibbonPanel>
          <RibbonPanel $w={72}>
            <RB k="sphere" w={23} />
            <DD w={13} />
            <RB k="diamond" />
            <RB k="orange" w={10} />
          </RibbonPanel>
        </Ribbon>

        <Main>
          <BrowserPanel>
            {treeItems.map((t) => (
              <TreeRow key={t.label}>
                <Connector>{t.chevron && <ChevronIcon />}</Connector>
                {treeIcons[t.icon]}
                <TreeLabel $faded={t.faded}>{t.label}</TreeLabel>
              </TreeRow>
            ))}
          </BrowserPanel>
          <Viewport>
            <ModelSvg viewBox="204 73 795 523" preserveAspectRatio="none">
              <defs>
                <linearGradient id="grey" x1="0" y1="0" x2="1" y2="1">
                  <stop offset="0" stopColor="#a8a8a6" />
                  <stop offset="1" stopColor="#adadaa" />
                </linearGradient>
              </defs>
              {/* left lobe */}
              <path
                d="M495 596C500 580 513 566 530 550C548 532 568 520 578 502C586 488 589 474 597 465C605 456 615 454 625 454C640 455 652 468 660 484C668 500 674 520 673 545C672 565 662 585 655 596Z"
                fill="url(#grey)"
              />
              <path
                d="M496 596C502 580 514 566 530 551C548 534 566 522 577 504C585 490 588 475 597 466"
                fill="none"
                stroke="#55583f"
                strokeWidth="2"
                strokeDasharray="6 1"
              />
              <path d="M590 478C593 472 596 467 600 464" fill="none" stroke="#3f4433" strokeWidth="3.5" />
              <path d="M545 596 552 582 560 565 563 570 557 585 552 596Z" fill="#4d523d" />
              <path d="M512 596 530 568 524 588Z" fill="#8b8d80" />
              {/* right body */}
              <path d="M848 435 889 461 877 487 848 465Z" fill="#59595a" />
              <path d="M862 445V477M866 448V480" stroke="#747474" />
              <path
                d="M953 387C925 392 890 398 868 408C853 415 846 423 848 430C856 444 870 455 888 460L905 450L953 430L999 425V345C985 348 970 360 962 372C958 378 955 383 953 387Z"
                fill="#a9a9a7"
              />
              <path
                d="M833 596C843 570 860 525 875 490C885 468 893 452 903 444C915 436 940 432 975 428L999 425V596Z"
                fill="#ababa8"
              />
              <path
                d="M833 596C843 570 860 525 875 490C882 473 888 462 893 453"
                fill="none"
                stroke="#60644d"
                strokeWidth="2.4"
                strokeDasharray="2 1"
              />
              <path
                d="M953 392 955 396 957 389 959 399 962 394 964 402 967 397 970 400 973 396 975 388 978 398 981 402 984 408 987 414 979 414 972 412 966 414 960 417 955 414 957 408 953 404Z"
                fill="#4e5444"
              />
              <path d="M953 396C955 385 960 375 966 367" fill="none" stroke="#d0d0d0" strokeWidth="0.8" />
            </ModelSvg>
          </Viewport>
        </Main>

        <ErrorWindow>
          <ErrorTitle>Autodesk Inventor Professional - 创建拉伸特征</ErrorTitle>
          <ErrorBody>
            <MessageBox>
              <MessageList>
                <TreeStem />
                <MessageRow $indent={38}>
                  <Minus />
                  <InfoIcon />
                  <b>草图18: 建立 草图 时出现问题</b>
                </MessageRow>
                <MessageRow $indent={55}>
                  <Minus />
                  <InfoIcon />
                  <b>处理草图时出现问题，请使用“编辑草图”更改草图几何图元或约束。</b>
                </MessageRow>
                <MessageRow $indent={74} $error>
                  <Dash />
                  <WarnIcon />
                  <b>不能求解尺寸，更改数值或删除一些草图约束以便求解尺寸。</b>
                </MessageRow>
                <MessageRow $indent={74} $error>
                  <Dash />
                  <WarnIcon />
                  <b>不能求解尺寸，更改数值或删除一些草图约束以便求解尺寸。</b>
                </MessageRow>
                <MessageRow $indent={74} $error $underline>
                  <Dash />
                  <WarnIcon />
                  <b>不能求解尺寸，更改数值或删除一些草图约束以便求解尺寸。&nbsp;</b>
                </MessageRow>
              </MessageList>
              <Scrollbar>
                <ArrowUp />
                <ScrollThumb>
                  <i />
                  <i />
                  <i />
                </ScrollThumb>
                <ArrowDown />
              </Scrollbar>
            </MessageBox>
            <ErrorFooter>
              <SmallBtn $w={24} $left={1}>
                <HelpIcon />
              </SmallBtn>
              <SmallBtn $w={24} $left={9}>
                <CopyIcon />
              </SmallBtn>
              <PushBtn $w={86} $left={279}>编辑</PushBtn>
              <PushBtn $w={86} $left={9}>取消</PushBtn>
            </ErrorFooter>
          </ErrorBody>
        </ErrorWindow>

        <ExtrudeWindow>
          <ExtrudeHead>
            <span>拉伸</span>
            <CloseBtn>
              <Ico width="12" height="11" viewBox="0 0 12 11">
                <path d="M1.5 1 10.5 10M10.5 1 1.5 10" stroke="#fff" strokeWidth="2.6" />
              </Ico>
            </CloseBtn>
          </ExtrudeHead>
          <ExtrudeClient>
            <TabStrip>
              <DlgTab $active>形状</DlgTab>
              <DlgTab>更多</DlgTab>
            </TabStrip>
            <FormArea>
              <LeftCol>
                <SelectRow>
                  <FeatureBtn>
                    <Cursor color="#555" line="#2cc6d2" />
                  </FeatureBtn>
                  <SelectLabel>截面轮廓</SelectLabel>
                </SelectRow>
                <SelectRow>
                  <FeatureBtn>
                    <Cursor color="#aaa" line="#b0109a" />
                  </FeatureBtn>
                  <SelectLabel>实体</SelectLabel>
                </SelectRow>
                <OutputGroup $w={90}>
                  <GroupLegend $shift={-7}>输出</GroupLegend>
                  <OutputRow>
                    <FeatureBtn $active>
                      <SolidOut />
                    </FeatureBtn>
                    <FeatureBtn>
                      <SurfaceOut />
                    </FeatureBtn>
                  </OutputRow>
                </OutputGroup>
              </LeftCol>
              <DirectionGroup>
                <FeatureBtn $active>
                  <DirIcon fill="#8fb7e0" stroke="#2f5c9a" trayTop />
                </FeatureBtn>
                <FeatureBtn>
                  <DirIcon fill="#fff" stroke="#2f5c9a" />
                </FeatureBtn>
                <FeatureBtn>
                  <DirIcon fill="#fff" stroke="#2e3a50" />
                </FeatureBtn>
                <DirSpacer />
                <FeatureBtn>
                  <AsymIcon />
                </FeatureBtn>
              </DirectionGroup>
              <RightCol>
                <RangeGroup>
                  <GroupLegend $shift={-2}>范围</GroupLegend>
                  <DropDown>距离</DropDown>
                  <NumberField>
                    4.5
                    <Spinner />
                  </NumberField>
                  <RangeButtons>
                    <FeatureBtn>
                      <RangeIcon v={0} />
                    </FeatureBtn>
                    <FeatureBtn>
                      <RangeIcon v={1} />
                    </FeatureBtn>
                    <FeatureBtn $active>
                      <RangeIcon v={2} />
                    </FeatureBtn>
                    <FeatureBtn>
                      <RangeIcon v={3} />
                    </FeatureBtn>
                  </RangeButtons>
                </RangeGroup>
                <MatchRow>
                  <DisabledCheck />
                  匹配形状
                </MatchRow>
              </RightCol>
            </FormArea>
            <DlgFooter>
              <HelpBtn>
                <HelpIcon />
              </HelpBtn>
              <PreviewGroup>
                <CheckBox>
                  <Ico width="10" height="10" viewBox="0 0 10 10">
                    <path d="M2 5.5 4 8 8.5 1.5" fill="none" stroke="#223" strokeWidth="1.4" />
                  </Ico>
                </CheckBox>
                <Ico width="26" height="14" viewBox="0 0 26 14">
                  <circle cx="5.5" cy="8.5" r="3.7" fill="none" stroke="#333" />
                  <circle cx="16.5" cy="8.5" r="3.7" fill="none" stroke="#333" />
                  <path d="M9 8.5H13M20 7 24 2.5H22M3 5 4 1.5" fill="none" stroke="#333" />
                </Ico>
              </PreviewGroup>
              <WideBtn $w={81} $left={47}>确定</WideBtn>
              <WideBtn $w={82} $left={5}>取消</WideBtn>
            </DlgFooter>
            <SliderBar />
          </ExtrudeClient>
        </ExtrudeWindow>
      </Root>
    </>
  );
}
